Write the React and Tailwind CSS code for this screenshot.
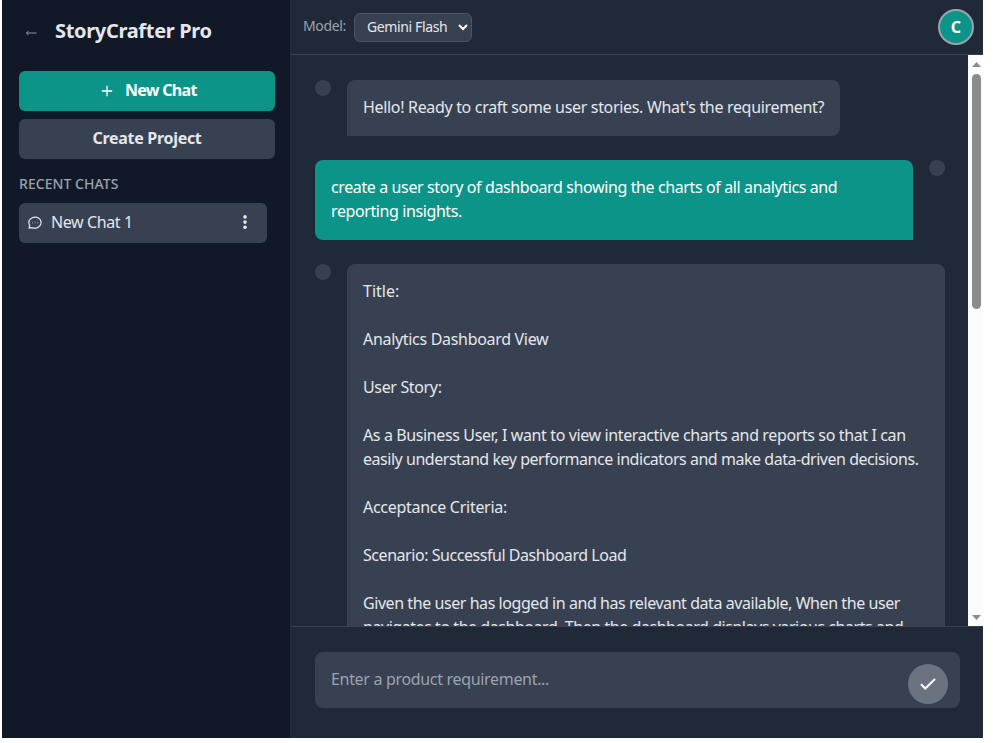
import React from "react";

const STORY = [
  ["Title:", "tracking-[0px]"],
  null,
  ["Analytics Dashboard View", "tracking-[-0.31px]"],
  null,
  ["User Story:", "tracking-[-0.35px]"],
  null,
  ["As a Business User, I want to view interactive charts and reports so that I can", "tracking-[-0.38px]"],
  ["easily understand key performance indicators and make data-driven decisions.", "tracking-[-0.465px]"],
  null,
  ["Acceptance Criteria:", "tracking-[-0.28px]"],
  null,
  ["Scenario: Successful Dashboard Load", "tracking-[-0.45px]"],
  null,
  ["Given the user has logged in and has relevant data available, When the user", "tracking-[-0.435px]"],
  ["navigates to the dashboard, Then the dashboard displays various charts and", "tracking-[-0.45px]"],
];

const REQUEST = [
  ["create a user story of dashboard showing the charts of all analytics and", "tracking-[-0.385px]"],
  ["reporting insights.", "tracking-[-0.4px]"],
];

function Lines({ lines }) {
  return lines.map((line, i) => (
    <p key={i} className={`h-6 whitespace-nowrap leading-6 ${line ? line[1] : ""}`}>
      {line ? line[0] : null}
    </p>
  ));
}

function Dot() {
  return <div className="size-4 shrink-0 rounded-full bg-[#374151]" />;
}

function Sidebar() {
  return (
    <aside className="flex w-72 shrink-0 flex-col bg-[#111827] pl-[17px] pr-[15px]">
      <div className="flex h-[63px] items-center pb-[2px]">
        <svg width="12" height="10" viewBox="0 0 12 10" className="ml-[6px] mt-1" fill="none" stroke="#9ca3af" strokeWidth="0.9">
          <path d="M11.5 5H1.5M3.6 3L1.3 5L3.6 7" />
        </svg>
        <h1 className="ml-[18px] whitespace-nowrap text-xl font-bold tracking-[-0.32px] text-[#e5e7eb]">StoryCrafter Pro</h1>
      </div>
      <button className="mt-2 flex h-10 shrink-0 items-center rounded-md bg-[#0d9488] pl-[82px] font-bold text-white">
        <svg width="12" height="12" viewBox="0 0 12 12" stroke="currentColor" strokeWidth="1.3">
          <path d="M6 0.8V11.2M0.8 6H11.2" />
        </svg>
        <span className="ml-3 pb-[2px] tracking-[-0.7px]">New Chat</span>
      </button>
      <button className="mt-2 h-10 shrink-0 rounded-md bg-[#374151] pb-[2px] font-bold tracking-[-0.3px] text-[#e5e7eb]">Create Project</button>
      <h2 className="mt-[15px] text-sm font-medium tracking-[0.05px] text-[#9ca3af]">RECENT CHATS</h2>
      <div className="mr-2 mt-[9px] flex h-10 items-center rounded-md bg-[#374151] pl-[9px] pr-[18px] text-[#e5e7eb]">
        <svg width="14" height="14" viewBox="0 0 14 14" fill="none" stroke="currentColor" strokeWidth="1.2" strokeLinejoin="round">
          <path d="M1 12.2L1.7 9.5C.3 6.8 1 3.8 3.4 2.3C5.6 .9 8.7 .9 10.8 2.3C13.4 4 13.8 7.6 11.8 9.9C9.8 12.2 6.6 12.7 4 11.6Z" />
          <path d="M4 6.8H5M6.6 6.8H7.6M9.2 6.8H10.2" strokeWidth="1" opacity=".6" />
        </svg>
        <span className="ml-[9px] pb-[2px] tracking-[-0.4px]">New Chat 1</span>
        <svg width="4" height="14" viewBox="0 0 4 14" fill="currentColor" className="mb-[2px] ml-auto mr-[2px] overflow-visible">
          <circle cx="2" cy="1.9" r="1.8" />
          <circle cx="2" cy="7.1" r="1.8" />
          <circle cx="2" cy="12.3" r="1.8" />
        </svg>
      </div>
    </aside>
  );
}

function Header() {
  return (
    <header className="flex h-[55px] shrink-0 items-center border-b border-[#374151] pl-3 pr-[9px] text-sm">
      <span className="w-[51px] pb-[2px] tracking-[-0.35px] text-[#9ca3af]">Model:</span>
      <div className="flex h-[29px] w-[118px] items-center justify-between rounded-md border border-[#4b5563] bg-[#374151] pl-3 pr-[3px] text-[#e5e7eb]">
        <span className="whitespace-nowrap tracking-[-0.38px]">Gemini Flash</span>
        <svg width="10" height="7" viewBox="0 0 10 7" fill="none" stroke="#fff" strokeWidth="2">
          <path d="M1 1L5 5L9 1" />
        </svg>
      </div>
      <div className="ml-auto flex size-9 items-center justify-center rounded-full border-2 border-[#9ca3af] bg-[#0d9488] text-base font-bold text-white">C</div>
    </header>
  );
}

function Scrollbar() {
  return (
    <div className="flex w-[15px] shrink-0 flex-col items-center bg-[#fcfcfc] pb-[6px] pt-[7px]">
      <svg width="9" height="5" viewBox="0 0 9 5" fill="#8b8b8b" className="ml-[2px] shrink-0"><path d="M0 5L4.5 0L9 5Z" /></svg>
      <div className="ml-[2px] mt-[7px] h-[235px] w-[9px] shrink-0 rounded-full bg-[#8b8b8b]" />
      <svg width="9" height="5" viewBox="0 0 9 5" fill="#8b8b8b" className="ml-[2px] mt-auto shrink-0"><path d="M0 0L4.5 5L9 0Z" /></svg>
    </div>
  );
}

export default function App() {
  return (
    <div className="h-[743px] overflow-hidden bg-white pl-[2px] pr-[10px] font-['Noto_Sans',sans-serif] text-base">
      <div className="flex h-[738px]">
        <Sidebar />
        <main className="flex min-w-0 flex-1 flex-col border-l border-[#222d3a] bg-[#1f2937]">
          <Header />
          <div className="flex min-h-0 flex-1">
            <div className="flex min-w-0 flex-1 flex-col gap-6 overflow-hidden pl-6 pr-[23px] pt-[25px] text-[#e5e7eb]">
              <div className="flex shrink-0 gap-4">
                <Dot />
                <div className="h-14 w-[493px] whitespace-nowrap rounded-lg rounded-bl-none bg-[#374151] px-4 pt-[15px] leading-6 tracking-[-0.325px]">
                  Hello! Ready to craft some user stories. What's the requirement?
                </div>
              </div>
              <div className="flex shrink-0 gap-4">
                <div className="h-20 flex-1 rounded-lg rounded-br-none bg-[#0d9488] px-4 pt-[15px] text-white">
                  <Lines lines={REQUEST} />
                </div>
                <Dot />
              </div>
              <div className="flex shrink-0 gap-4">
                <Dot />
                <div className="min-w-0 flex-1 rounded-lg rounded-bl-none bg-[#374151] px-4 pb-4 pt-[15px]">
                  <Lines lines={STORY} />
                </div>
              </div>
            </div>
            <Scrollbar />
          </div>
          <footer className="h-28 shrink-0 border-t border-[#374151] pl-6 pr-[23px] pt-[25px]">
            <div className="flex h-14 items-center justify-between rounded-lg bg-[#374151] pl-4 pr-3">
              <span className="pb-[2px] tracking-[-0.32px] text-[#9ca3af]">Enter a product requirement...</span>
              <div className="mt-2 flex size-10 items-center justify-center rounded-full bg-[#6b7280]">
                <svg width="16" height="12" viewBox="0 0 16 12" fill="none" stroke="#fff" strokeWidth="2">
                  <path d="M1 6.2L5.3 10.5L15 1" />
                </svg>
              </div>
            </div>
          </footer>
        </main>
      </div>
    </div>
  );
}
